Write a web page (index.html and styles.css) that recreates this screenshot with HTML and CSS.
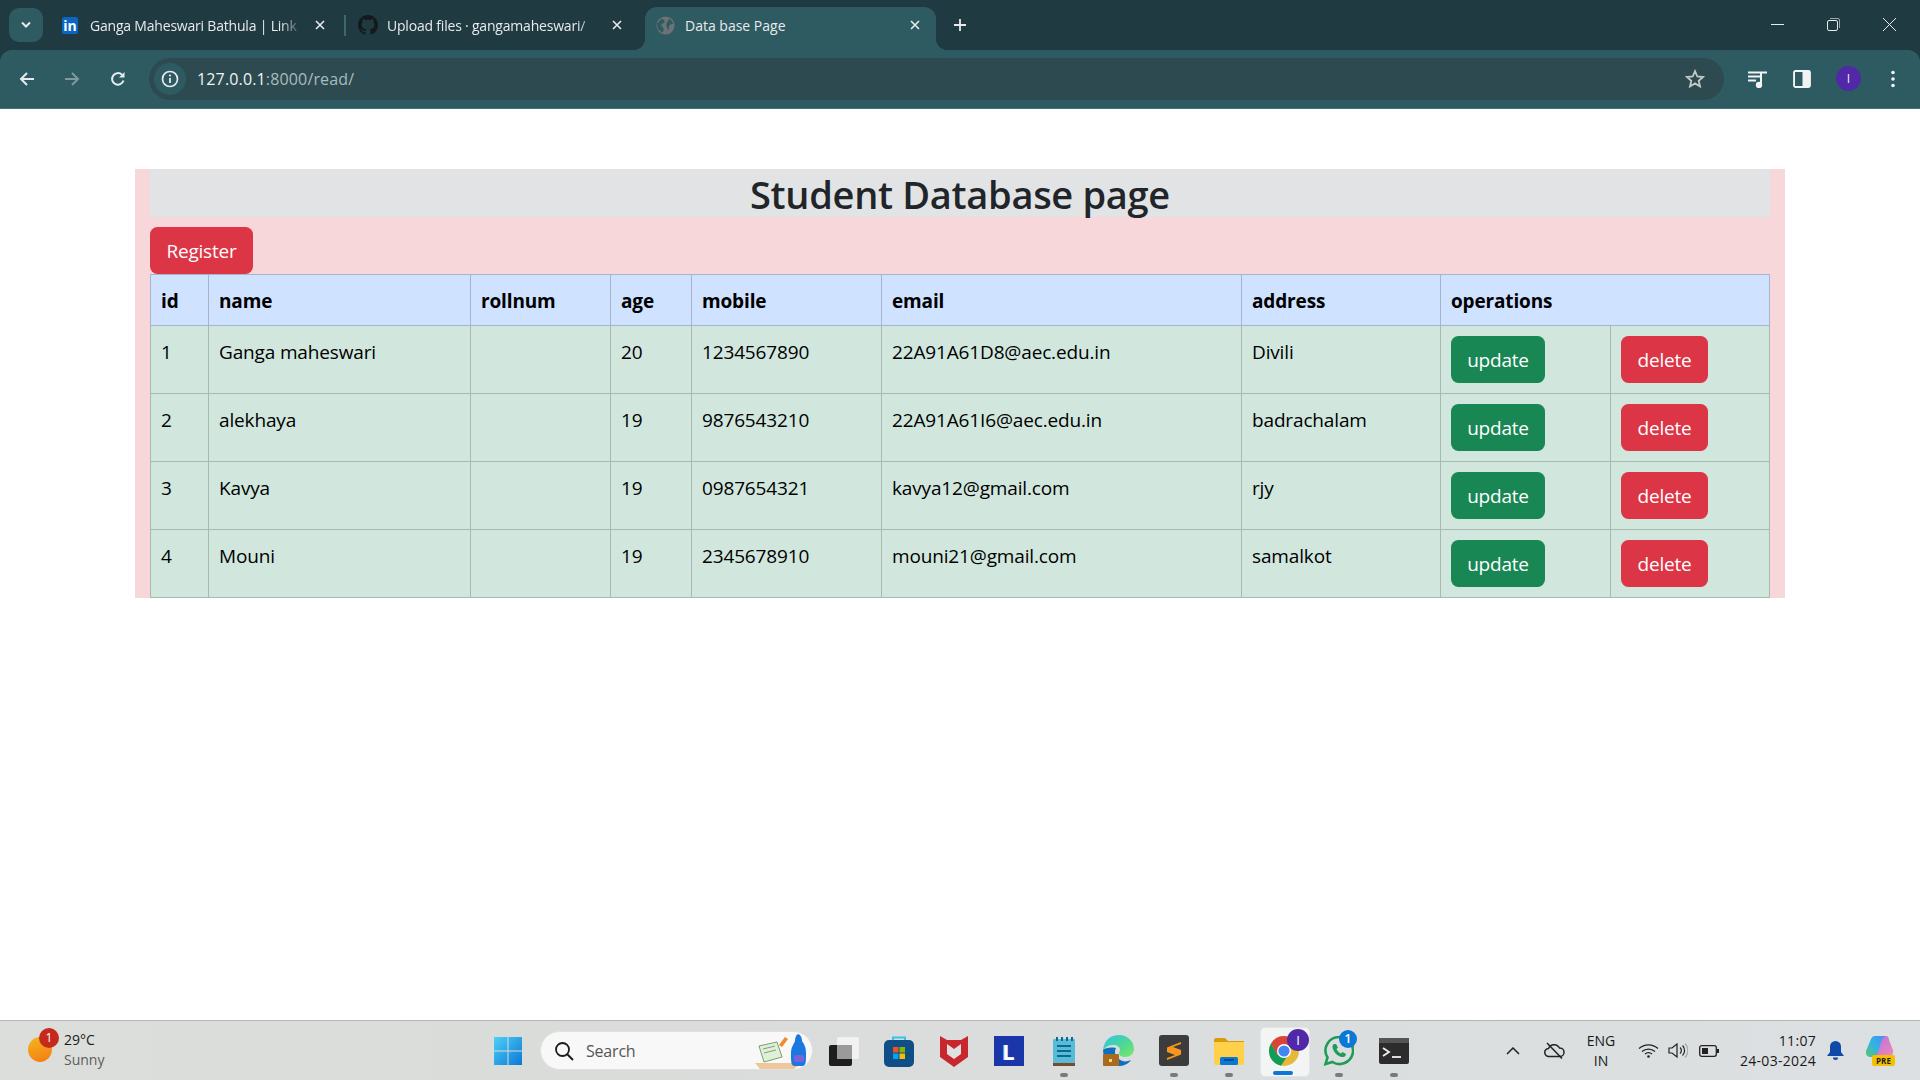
FILE: index.html
```html
<!DOCTYPE html>
<html lang="en">
<head>
<meta charset="utf-8">
<title>Data base Page</title>
<link rel="stylesheet" href="styles.css">
</head>
<body>
<header class="browser">
  <div class="tabstrip">
    <div class="tabsearch"><svg width="12" height="8" viewBox="0 0 12 8"><path d="M2 1.500l4 4 4-4" fill="none" stroke="#e8eaed" stroke-width="2"/></svg></div>
    <div class="tab tab-1">
      <span class="li-icon">in</span>
      <span class="tab-title">Ganga Maheswari Bathula | Link</span>
      <svg class="tab-x" width="12" height="12" viewBox="0 0 12 12"><path d="M2 2l8 8M10 2l-8 8" stroke="#e8eaed" stroke-width="1.600"/></svg>
    </div>
    <span class="tab-sep"></span>
    <div class="tab tab-2">
      <svg class="fav" width="20" height="20" viewBox="0 0 16 16"><path fill="#15181c" d="M8 0C3.58 0 0 3.58 0 8c0 3.54 2.29 6.53 5.47 7.59.4.07.55-.17.55-.38 0-.19-.01-.82-.01-1.49-2.01.37-2.53-.49-2.69-.94-.09-.23-.48-.94-.82-1.13-.28-.15-.68-.52-.01-.53.63-.01 1.08.58 1.23.82.72 1.21 1.87.87 2.33.66.07-.52.28-.87.51-1.07-1.78-.2-3.64-.89-3.64-3.95 0-.87.31-1.59.82-2.15-.08-.2-.36-1.02.08-2.12 0 0 .67-.21 2.2.82.64-.18 1.32-.27 2-.27.68 0 1.36.09 2 .27 1.53-1.04 2.2-.82 2.2-.82.44 1.1.16 1.92.08 2.12.51.56.82 1.27.82 2.15 0 3.07-1.87 3.75-3.65 3.95.29.25.54.73.54 1.48 0 1.07-.01 1.93-.01 2.2 0 .21.15.46.55.38A8.013 8.013 0 0016 8c0-4.42-3.58-8-8-8z"/></svg>
      <span class="tab-title">Upload files · gangamaheswari/</span>
      <svg class="tab-x" width="12" height="12" viewBox="0 0 12 12"><path d="M2 2l8 8M10 2l-8 8" stroke="#e8eaed" stroke-width="1.600"/></svg>
    </div>
    <div class="tab tab-active">
      <svg class="fav" width="19" height="19" viewBox="0 0 20 20"><circle cx="10" cy="10" r="9.500" fill="#6b7376"/><path d="M6 2.500c2 1.500 3.500 2 3 4-.5 1.500-3 1-3.500 3-.3 1.500 2 2 2.500 3.500.3 1.500-.3 3-1 4.500L2 14 1 8zM13 3c2 0 4.500 3 5 5-1.500 1-3 .5-4 2-1 1.200 0 3-.5 4.500-1 .5-1.500-1.500-2-3-.5-1.500-1-3 0-4.500s2.500-2 1.500-4z" fill="#2e5a62"/></svg>
      <span class="tab-title">Data base Page</span>
      <svg class="tab-x" width="12" height="12" viewBox="0 0 12 12"><path d="M2 2l8 8M10 2l-8 8" stroke="#e8eaed" stroke-width="1.600"/></svg>
    </div>
    <svg class="newtab" width="14" height="14" viewBox="0 0 14 14"><path d="M7 1v12M1 7h12" stroke="#e8eaed" stroke-width="1.800"/></svg>
    <div class="winctl">
      <svg width="13" height="13" viewBox="0 0 13 13"><path d="M0 6.500h13" stroke="#e8eaed" stroke-width="1"/></svg>
      <svg width="13" height="13" viewBox="0 0 13 13"><rect x=".5" y="2.500" width="10" height="10" rx="1.500" fill="none" stroke="#e8eaed"/><path d="M3 .5h8a1.500 1.500 0 0 1 1.500 1.500v8" fill="none" stroke="#9aa8aa"/></svg>
      <svg width="13" height="13" viewBox="0 0 13 13"><path d="M0 0l13 13M13 0L0 13" stroke="#e8eaed" stroke-width="1"/></svg>
    </div>
  </div>
  <div class="toolbar">
    <svg class="nav-ic" width="16" height="16" viewBox="0 0 16 16"><path d="M15 8H2M8 2L2 8l6 6" fill="none" stroke="#e8eaed" stroke-width="2"/></svg>
    <svg class="nav-ic" width="16" height="16" viewBox="0 0 16 16"><path d="M1 8h13M8 2l6 6-6 6" fill="none" stroke="#7f9a9f" stroke-width="2"/></svg>
    <svg class="nav-ic" width="16" height="16" viewBox="0 0 16 16"><path d="M13.500 9.500A5.800 5.800 0 1 1 12 3.800" fill="none" stroke="#e8eaed" stroke-width="2"/><path d="M14.500 1v5.500H9z" fill="#e8eaed"/></svg>
    <div class="omnibox">
      <span class="info"><svg width="18" height="18" viewBox="0 0 18 18"><circle cx="9" cy="9" r="7.500" fill="none" stroke="#e8eaed" stroke-width="1.700"/><path d="M9 8v5" stroke="#e8eaed" stroke-width="1.800"/><circle cx="9" cy="5.500" r="1.100" fill="#e8eaed"/></svg></span>
      <span class="url"><b>127.0.0.1</b>:8000/read/</span>
      <svg class="star" width="20" height="20" viewBox="0 0 20 20"><path d="M10 2.200l2.300 5.300 5.700.5-4.300 3.800 1.300 5.600-5-3-5 3 1.300-5.600L2 8l5.700-.5z" fill="none" stroke="#c4c9ca" stroke-width="1.800"/></svg>
    </div>
    <svg class="tool-ic media" width="20" height="18" viewBox="0 0 20 18"><path d="M0 2.500h12M0 6.500h12M0 10.500h8" stroke="#f1f3f4" stroke-width="1.800"/><path d="M13 16V2.500h6" fill="none" stroke="#f1f3f4" stroke-width="2"/><circle cx="11" cy="15" r="3.200" fill="#f1f3f4"/></svg>
    <svg class="tool-ic panel" width="18" height="18" viewBox="0 0 18 18"><rect x="1" y="1" width="16" height="16" rx="1.500" fill="#f1f3f4" stroke="#f1f3f4" stroke-width="1.800"/><rect x="2" y="2" width="7.500" height="14" fill="#2e5a62"/></svg>
    <span class="avatar">I</span>
    <svg class="tool-ic dots" width="4" height="18" viewBox="0 0 4 18"><circle cx="2" cy="2.500" r="1.800" fill="#f1f3f4"/><circle cx="2" cy="9" r="1.800" fill="#f1f3f4"/><circle cx="2" cy="15.500" r="1.800" fill="#f1f3f4"/></svg>
  </div>
</header>

<main class="page">
  <section class="container">
    <h2 class="title">Student Database page</h2>
    <a class="btn btn-danger btn-register">Register</a>
    <table class="students">
      <colgroup>
        <col class="c-id"><col class="c-name"><col class="c-roll"><col class="c-age"><col class="c-mob"><col class="c-mail"><col class="c-addr"><col class="c-up"><col class="c-del">
      </colgroup>
      <thead>
        <tr><th>id</th><th>name</th><th>rollnum</th><th>age</th><th>mobile</th><th>email</th><th>address</th><th colspan="2">operations</th></tr>
      </thead>
      <tbody>
        <tr><td>1</td><td>Ganga maheswari</td><td></td><td>20</td><td>1234567890</td><td>22A91A61D8@aec.edu.in</td><td>Divili</td><td class="op"><a class="btn btn-success">update</a></td><td class="op"><a class="btn btn-danger">delete</a></td></tr>
        <tr><td>2</td><td>alekhaya</td><td></td><td>19</td><td>9876543210</td><td>22A91A61I6@aec.edu.in</td><td>badrachalam</td><td class="op"><a class="btn btn-success">update</a></td><td class="op"><a class="btn btn-danger">delete</a></td></tr>
        <tr><td>3</td><td>Kavya</td><td></td><td>19</td><td>0987654321</td><td>kavya12@gmail.com</td><td>rjy</td><td class="op"><a class="btn btn-success">update</a></td><td class="op"><a class="btn btn-danger">delete</a></td></tr>
        <tr><td>4</td><td>Mouni</td><td></td><td>19</td><td>2345678910</td><td>mouni21@gmail.com</td><td>samalkot</td><td class="op"><a class="btn btn-success">update</a></td><td class="op"><a class="btn btn-danger">delete</a></td></tr>
      </tbody>
    </table>
  </section>
</main>

<footer class="taskbar">
  <div class="weather">
    <span class="sun"></span>
    <span class="sun-badge">1</span>
    <div class="w-text"><span>29°C</span><span class="w-sub">Sunny</span></div>
  </div>
  <div class="task-item">
    <svg width="30" height="30" viewBox="0 0 30 30"><defs><linearGradient id="w" x1="0" y1="0" x2="1" y2="1"><stop offset="0" stop-color="#4fd0f7"/><stop offset="1" stop-color="#0a78d4"/></linearGradient></defs><path fill="url(#w)" d="M1 1h13.500v13.500H1zM15.500 1H29v13.500H15.500zM1 15.500h13.500V29H1zM15.500 15.500H29V29H15.500z"/></svg>
  </div>
  <div class="searchbox">
    <svg width="20" height="20" viewBox="0 0 20 20"><circle cx="8.500" cy="8.500" r="6.500" fill="none" stroke="#1c1c1c" stroke-width="1.800"/><path d="M13 13l6 6" stroke="#1c1c1c" stroke-width="2"/></svg>
    <span class="search-text">Search</span>
    <svg class="search-art" width="58" height="36" viewBox="0 0 58 36"><path d="M3 30h38l5 3-4 3H8z" fill="#eec89a"/><path d="M7 13l18-4 5 15-18 5z" fill="#dff0d8" stroke="#7aa06a"/><path d="M11 16l12-3M12 20l12-3" stroke="#8a9a80"/><path d="M27 12l6-8 3 2-6 8z" fill="#f08a2c"/><path d="M42 33c-3-1-3-4-3-13 0-6 3-9 4-12 0-3 1-6 3-7 3 1 4 4 4 7 2 3 4 6 4 12 0 9 0 12-3 13z" fill="#1a78e0"/><rect x="42" y="22" width="10" height="7" rx="2" fill="#7b62d8"/></svg>
  </div>
  <div class="task-list">
    <div class="task-item"><svg width="30" height="30" viewBox="0 0 30 30"><rect x="0" y="9" width="23" height="21" rx="2" fill="#1d1d1d"/><rect x="8" y="1" width="22" height="22" rx="2" fill="#f4f4f4" fill-opacity=".85"/><rect x="8" y="9" width="15" height="14" fill="#9a9a9a"/></svg></div>
    <div class="task-item"><svg width="30" height="32" viewBox="0 0 30 32"><path d="M9 6V2.500h12V6" fill="none" stroke="#35c3ef" stroke-width="2"/><rect x="0" y="5" width="30" height="27" rx="5" fill="#0f4f86"/><rect x="9" y="12" width="5.500" height="5.500" fill="#f25022"/><rect x="15.500" y="12" width="5.500" height="5.500" fill="#7fba00"/><rect x="9" y="18.500" width="5.500" height="5.500" fill="#00a4ef"/><rect x="15.500" y="18.500" width="5.500" height="5.500" fill="#ffb900"/></svg></div>
    <div class="task-item"><svg width="28" height="32" viewBox="0 0 28 32"><path d="M0 1l7 4h14l7-4v21L14 32 0 22z" fill="#c8282d"/><path d="M7 9l7 5 7-5v10l-7 5-7-5z" fill="#dfe1e0"/></svg></div>
    <div class="task-item"><span class="l-app">L</span></div>
    <div class="task-item"><svg width="22" height="30" viewBox="0 0 22 30"><rect x="0" y="3" width="22" height="25" rx="1" fill="#58bcd8"/><rect x="0" y="27" width="22" height="3" fill="#7b4a2c"/><path d="M4 1v4M9 1v4M14 1v4M19 1v4" stroke="#0c6a8e" stroke-width="2"/><path d="M4 10h14M4 15h14M4 20h14" stroke="#0c6a8e" stroke-width="2"/></svg></div>
    <div class="task-item"><svg width="31" height="31" viewBox="0 0 31 31"><defs><linearGradient id="e" x1="0" y1="0" x2="1" y2="1"><stop offset="0" stop-color="#2dc4e8"/><stop offset=".6" stop-color="#52d98e"/><stop offset="1" stop-color="#7ee86b"/></linearGradient></defs><path d="M0 15C1 5 8 0 16 0c9 0 15 7 15 14 0 5-4 8-9 8-4 0-6-2-6-4 0-1 1-2 1-3 0-3-3-5-7-5-5 0-8 3-10 5z" fill="url(#e)"/><path d="M0 15c0 9 7 16 15 16 6 0 10-2 13-6-4 2-9 2-12-1-4-3-5-7-3-11-6-1-11 0-13 2z" fill="#0c6fc0"/><rect x="0" y="19" width="16" height="12" rx="1" fill="#a86a1e"/><rect x="6" y="24" width="3" height="3" fill="#f5d67a"/></svg></div>
    <div class="task-item"><svg width="30" height="31" viewBox="0 0 30 31"><rect width="30" height="31" rx="3" fill="#3c3c3c"/><path d="M22 7L8 12.500v4.500l8 3-8 3v2l14-5.500v-4.500l-8-3 8-3z" fill="#f8961e"/></svg></div>
    <div class="task-item"><svg width="30" height="30" viewBox="0 0 30 30"><path d="M0 4a2 2 0 0 1 2-2h9l3 3h16v3H0z" fill="#d99a10"/><path d="M0 6h30v21a2 2 0 0 1-2 2H2a2 2 0 0 1-2-2z" fill="#ffd04a"/><rect x="6" y="21" width="18" height="8" rx="1.500" fill="#0a78d4"/><path d="M10 24h10" stroke="#073f70" stroke-width="1.500"/></svg></div>
    <div class="task-item task-active">
      <svg width="32" height="32" viewBox="0 0 32 32"><circle cx="16" cy="16" r="15" fill="#e8b83a"/><path d="M16 1a15 15 0 0 0-13 7.500L9.500 20 16 10h13A15 15 0 0 0 16 1z" fill="#db4437"/><path d="M3 8.500A15 15 0 0 0 13 30.700L20 20H9.500z" fill="#0f9d58"/><circle cx="16" cy="16" r="7" fill="#fff"/><circle cx="16" cy="16" r="5.600" fill="#4285f4"/></svg>
      <span class="badge badge-purple">I</span>
    </div>
    <div class="task-item">
      <svg width="31" height="31" viewBox="0 0 31 31"><path d="M16 2A13.500 13.500 0 0 0 4.500 22.500L2.500 29l7-2A13.500 13.500 0 1 0 16 2z" fill="none" stroke="#1f9d57" stroke-width="2.600"/><path d="M11 9c-2 1-2 4 0 7 2 4 6 6 9 6 2 0 3-2 3-3l-3.500-2-1.500 1.500c-2-1-3.500-2.500-4.500-4.500l1.500-1.500L13 9z" fill="#1f9d57"/></svg>
      <span class="badge badge-blue">1</span>
    </div>
    <div class="task-item"><svg width="30" height="26" viewBox="0 0 30 26"><rect width="30" height="26" rx="2" fill="#2c2c2c"/><rect width="30" height="5" fill="#555"/><path d="M4 10l6 4-6 4" fill="none" stroke="#f0f0f0" stroke-width="1.800"/><path d="M13 19h9" stroke="#f0f0f0" stroke-width="1.800"/></svg></div>
  </div>
  <div class="tray">
    <svg class="t-chev" width="14" height="8" viewBox="0 0 14 8"><path d="M1 7l6-6 6 6" fill="none" stroke="#222" stroke-width="1.500"/></svg>
    <svg class="t-cloud" width="21" height="17" viewBox="0 0 21 17"><path d="M5 14.500a4 4 0 0 1-.5-8A6 6 0 0 1 15.500 6a4.200 4.200 0 0 1 .5 8.500z" fill="none" stroke="#222" stroke-width="1.500"/><path d="M3 1l15 15.500" stroke="#222" stroke-width="1.500"/></svg>
    <div class="t-lang"><span>ENG</span><span>IN</span></div>
    <svg class="t-wifi" width="21" height="15" viewBox="0 0 21 15"><path d="M1 5.500a14 14 0 0 1 19 0M4 8.500a10 10 0 0 1 13 0M7 11a5.500 5.500 0 0 1 7 0" fill="none" stroke="#222" stroke-width="1.300"/><circle cx="10.500" cy="13.500" r="1.300" fill="#222"/></svg>
    <svg class="t-vol" width="20" height="17" viewBox="0 0 20 17"><path d="M1 6v5h3l5 4V2L4 6z" fill="none" stroke="#222" stroke-width="1.200"/><path d="M12 5.500a4 4 0 0 1 0 6M14.500 3.500a7 7 0 0 1 0 10" fill="none" stroke="#222" stroke-width="1.200"/><path d="M17 1.500a10 10 0 0 1 0 14" fill="none" stroke="#aaa" stroke-width="1.200"/></svg>
    <svg class="t-bat" width="20" height="12" viewBox="0 0 20 12"><rect x=".7" y=".7" width="16.600" height="10.600" rx="2" fill="none" stroke="#222" stroke-width="1.300"/><rect x="3" y="3" width="6" height="6" fill="#222"/><rect x="18" y="4" width="2" height="4" fill="#222"/></svg>
    <div class="t-clock"><span>11:07</span><span>24-03-2024</span></div>
    <svg class="t-bell" width="17" height="20" viewBox="0 0 17 20"><path d="M8.500 0a5.500 5.500 0 0 0-5.500 5.500V11L0 15h17l-3-4V5.500A5.500 5.500 0 0 0 8.500 0z" fill="#0f4aa8"/><path d="M6 16.500h5a2.500 2.500 0 0 1-5 0z" fill="#0f4aa8"/></svg>
    <div class="copilot">
      <svg width="28" height="22" viewBox="0 0 28 22"><defs><linearGradient id="c1" x1="0" y1="1" x2="1" y2="0"><stop offset="0" stop-color="#5ec46a"/><stop offset=".5" stop-color="#2fb4e8"/><stop offset="1" stop-color="#4a8cf0"/></linearGradient><linearGradient id="c2" x1="0" y1="0" x2="1" y2="1"><stop offset="0" stop-color="#b56ee0"/><stop offset="1" stop-color="#f08ab8"/></linearGradient></defs><path d="M8 0h12c2 0 3 2 3 4l4 10c1 3-1 6-4 6H10z" fill="url(#c2)"/><path d="M9 0h11c-3 1-4 3-5 6l-3 10c-1 3-3 5-6 5H4C1 21-1 18 0 15L5 3c1-2 2-3 4-3z" fill="url(#c1)"/></svg>
      <span class="pre">PRE</span>
    </div>
  </div>
</footer>
</body>
</html>
```

FILE: styles.css
```css
* { box-sizing: border-box; }
html, body { margin: 0; height: 100%; }
body {
  display: flex;
  flex-direction: column;
  height: 100vh;
  overflow: hidden;
  font-family: "Open Sans", "Noto Sans", sans-serif;
  background: #fff;
}

/* browser chrome */
.browser { flex: none; height: 109px; background: #1f3a40; color: #e8eaed; }
.tabstrip { height: 50px; display: flex; align-items: flex-end; position: relative; }
.tabsearch {
  width: 34px; height: 34px; margin: 0 19px 8px 9px; border-radius: 10px;
  background: #2e5a62; display: flex; align-items: center; justify-content: center;
}
.tab {
  height: 43px; display: flex; align-items: center; font-size: 14px;
  letter-spacing: -0.2px; border-radius: 12px 12px 0 0; padding-bottom: 7px;
}
.tab-1 { width: 282px; padding-right: 18px; }
.tab-2 { width: 299px; padding-left: 12px; padding-right: 22px; }
.tab-active {
  width: 291px; background: #2e5a62; padding-left: 11px; padding-right: 15px;
  letter-spacing: 0; position: relative;
}
.tab-active::before, .tab-active::after {
  content: ""; position: absolute; bottom: 0; width: 12px; height: 12px;
}
.tab-active::before { left: -12px; background: radial-gradient(circle at 0 0, transparent 12px, #2e5a62 12.500px); }
.tab-active::after { right: -12px; background: radial-gradient(circle at 100% 0, transparent 12px, #2e5a62 12.500px); }
.tab-title {
  flex: 1; min-width: 0; white-space: nowrap; overflow: hidden; margin-left: 10px;
  -webkit-mask-image: linear-gradient(to right, #000 90%, transparent 100%);
  mask-image: linear-gradient(to right, #000 90%, transparent 100%);
}
.tab-1 .tab-title { margin-left: 12px; }
.tab-2 .tab-title { margin-left: 9px; }
.tab-active .tab-title { -webkit-mask-image: none; mask-image: none; }
.li-icon {
  width: 16px; height: 17px; flex: none; background: #0a66c2; color: #fff; border-radius: 2px;
  font: 700 14px/17px "Open Sans", sans-serif; text-align: center; letter-spacing: 0;
}
.fav { flex: none; }
.tab-x { flex: none; margin-left: 12px; }
.tab-sep { width: 2px; height: 21px; background: #3f666d; margin: 0 0 14px 0; align-self: flex-end; }
.newtab { margin: 0 0 18px 17px; }
.winctl {
  margin: 0 0 0 auto; height: 50px; display: flex; align-items: center; gap: 43px; padding: 0 24px 2px 0;
}

.toolbar {
  height: 59px; background: #2e5a62; border-radius: 12px 12px 0 0;
  display: flex; align-items: center; padding: 0 0 1px 0;
  border-bottom: 1px solid #4a7077;
}
.nav-ic { flex: none; margin-left: 20px; margin-right: 9px; }
.nav-ic:first-child { margin-left: 19px; }
.nav-ic:nth-child(3) { margin-left: 21px; margin-right: 23px; }
.omnibox {
  width: 1575px; height: 42px; border-radius: 21px; background: #2d4a50;
  display: flex; align-items: center; padding: 0 19px 0 5px; flex: none;
}
.info {
  width: 32px; height: 32px; border-radius: 50%; background: #2e5a62;
  display: flex; align-items: center; justify-content: center; flex: none;
}
.url { flex: 1; margin-left: 11px; font-size: 16px; color: #a9bcc0; letter-spacing: 0.15px; }
.url b { font-weight: 400; color: #f1f3f4; }
.tool-ic { flex: none; }
.media { margin-left: 24px; }
.panel { margin-left: 25px; }
.avatar {
  width: 25px; height: 25px; border-radius: 50%; background: #5128a8; color: #eee;
  font-size: 12px; line-height: 25px; text-align: center; margin-left: 25px; flex: none;
}
.dots { margin-left: 30px; }

/* page */
.page { flex: 1; min-height: 0; padding-top: 60px; }
.container { width: 1650px; margin: 0 auto; padding: 0 15px; background: #f8d7da; }
.title {
  height: 48px; margin: 0 0 10px; padding-top: 2px; background: #e2e3e5; color: #212529; text-align: center;
  font-size: 38px; line-height: 46px; font-weight: 600; letter-spacing: -0.3px;
}
.btn {
  display: inline-block; height: 47px; font-size: 19px; line-height: 30px; letter-spacing: -0.2px;
  padding: 7.5px 0; border-radius: 7.5px; color: #fff; text-align: center; vertical-align: top;
  border: 1px solid transparent;
}
.btn-danger { background: #dc3545; width: 87px; }
.btn-success { background: #198754; width: 94px; }
.btn-register { display: block; width: 103px; }
.students {
  width: 1619px; table-layout: fixed; border-collapse: collapse;
  font-size: 19px; line-height: 30px; letter-spacing: -0.15px; color: #000;
}
.c-id { width: 58px; } .c-name { width: 262px; } .c-roll { width: 140px; } .c-age { width: 81px; }
.c-mob { width: 190px; } .c-mail { width: 360px; } .c-addr { width: 199px; } .c-up { width: 170px; } .c-del { width: 159px; }
.students th, .students td { padding: 11px 10px 9px; vertical-align: top; text-align: left; }
.students td.op { padding: 10px; }
.students th { background: #cfe2ff; border: 1px solid #a6b5cc; font-weight: 700; }
.students td { background: #d1e7dd; border: 1px solid #a7b9b1; }

/* taskbar */
.taskbar {
  flex: none; height: 60px; display: flex; align-items: center;
  background: linear-gradient(90deg, #dcdedb, #dadcda 30%, #dce0e2 100%);
  border-top: 1px solid #b4b6b6; color: #1a1a1a;
}
.weather { width: 480px; height: 59px; position: relative; display: flex; align-items: center; padding-left: 64px; flex: none; }
.sun { position: absolute; left: 28px; top: 16px; width: 24px; height: 25px; border-radius: 50% 40% 50% 50%; background: linear-gradient(160deg, #f2b81f, #f57a10); }
.sun-badge {
  position: absolute; left: 39px; top: 7px; width: 20px; height: 20px; border-radius: 50%;
  background: #c42b1c; color: #fff; font-size: 12px; line-height: 20px; text-align: center;
}
.w-text { display: flex; flex-direction: column; font-size: 14px; line-height: 20px; padding-bottom: 1px; }
.w-sub { color: #5c5c5c; }
.task-item { width: 55px; height: 48px; position: relative; display: flex; align-items: center; justify-content: center; flex: none; }
.searchbox {
  width: 273px; height: 39px; margin-left: 5px; flex: none; border-radius: 20px; background: #f8f8f8;
  border: 1px solid #e0e0e0; display: flex; align-items: center; padding-left: 13px;
}
.search-text { margin-left: 12px; font-size: 16px; color: #555; flex: 1; letter-spacing: -0.2px; }
.search-art { margin-right: 2px; }
.task-list { display: flex; margin-left: 3px; flex: none; }
.task-list .task-item::after { content: ""; position: absolute; bottom: -2px; left: 24px; width: 8px; height: 4px; border-radius: 2px; background: #7b7b7b; display: none; }
.task-list .task-item:nth-child(5)::after,
.task-list .task-item:nth-child(7)::after,
.task-list .task-item:nth-child(8)::after,
.task-list .task-item:nth-child(10)::after,
.task-list .task-item:nth-child(11)::after { display: block; }
.task-active::before { content: ""; position: absolute; left: 3.500px; top: 0; width: 48px; height: 48px; border-radius: 5px; background: #f3f4f4; border: 1px solid #e4e4e4; }
.task-active svg { position: relative; }
.task-list .task-active::after { display: block; left: 17px; bottom: 0; width: 20px; background: #0a78d4; }
.badge { position: absolute; width: 22px; height: 22px; border-radius: 50%; color: #fff; font-size: 13px; line-height: 22px; text-align: center; top: 2px; left: 31px; }
.badge-purple { background: #5128a8; }
.badge-blue { background: #0a78d4; top: 3px; left: 28px; font-weight: 600; width: 18px; height: 18px; line-height: 18px; font-size: 12px; }
.l-app { width: 30px; height: 30px; background: #1a36a8; color: #fff; font: 700 22px/30px "Open Sans", sans-serif; text-align: center; text-shadow: -1px 0 #7fb0e0; }
.tray { display: flex; align-items: center; flex: none; height: 59px; margin-left: 85px; position: relative; }
.tray > svg { flex: none; }
.t-cloud { margin-left: 24px; }
.t-lang { width: 50px; margin-left: 11px; display: flex; flex-direction: column; align-items: center; font-size: 14px; line-height: 20px; }
.t-wifi { margin-left: 12px; }
.t-vol { margin-left: 9px; }
.t-bat { margin-left: 11px; }
.t-clock { width: 97px; display: flex; flex-direction: column; align-items: flex-end; font-size: 14px; line-height: 20px; letter-spacing: 0.3px; }
.t-bell { margin-left: 11px; }
.copilot { margin-left: 22px; position: relative; width: 30px; height: 30px; }
.pre { position: absolute; left: 6px; top: 19px; width: 23px; height: 11px; border-radius: 2px; background: #f5c000; color: #222; font-size: 8px; line-height: 11px; font-weight: 700; text-align: center; }
```
